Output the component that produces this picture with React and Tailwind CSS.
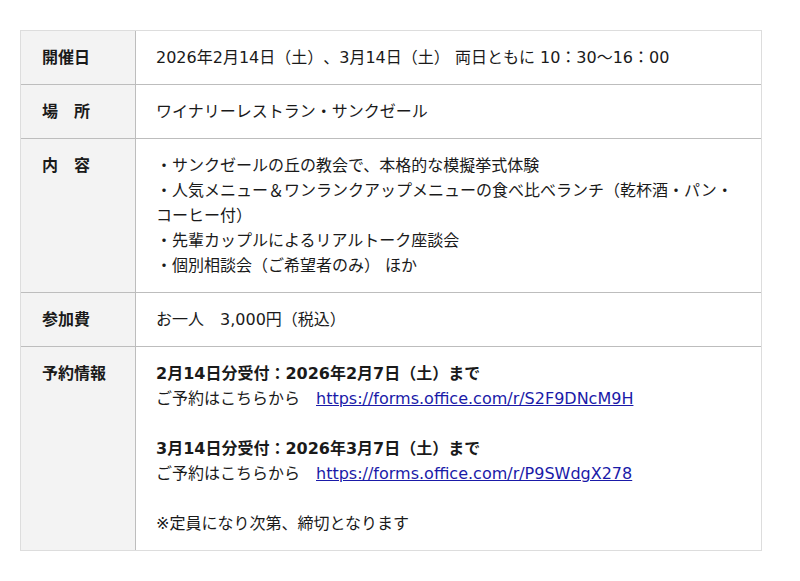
import React from 'react';

const rows = [
  {
    label: '開催日',
    content: <p>2026年2月14日（土）、3月14日（土） 両日ともに 10：30〜16：00</p>
  },
  {
    label: '場　所',
    content: <p>ワイナリーレストラン・サンクゼール</p>
  },
  {
    label: '内　容',
    content: (
      <div>
        <p>・サンクゼールの丘の教会で、本格的な模擬挙式体験</p>
        <p>・人気メニュー＆ワンランクアップメニューの食べ比べランチ（乾杯酒・パン・コーヒー付）</p>
        <p>・先輩カップルによるリアルトーク座談会</p>
        <p>・個別相談会（ご希望者のみ） ほか</p>
      </div>
    )
  },
  {
    label: '参加費',
    content: <p>お一人　3,000円（税込）</p>
  },
  {
    label: '予約情報',
    content: (
      <div>
        <p className="font-bold">2月14日分受付：2026年2月7日（土）まで</p>
        <p>
          {'ご予約はこちらから　'}
          <a href="#" className="text-[#1a1aa8] underline">https://forms.office.com/r/S2F9DNcM9H</a>
        </p>
        <p>&nbsp;</p>
        <p className="font-bold">3月14日分受付：2026年3月7日（土）まで</p>
        <p>
          {'ご予約はこちらから　'}
          <a href="#" className="text-[#1a1aa8] underline">https://forms.office.com/r/P9SWdgX278</a>
        </p>
        <p>&nbsp;</p>
        <p>※定員になり次第、締切となります</p>
      </div>
    )
  }
];

export default function App() {
  return (
    <div
      className="min-h-[581px] bg-white pl-[20px] pt-[30px] text-[16px] leading-[25px] text-[#1a1a1a] [text-spacing-trim:space-all]"
      style={{ fontFamily: '"DejaVu Sans", "Noto Sans CJK JP", sans-serif' }}
    >
      <div className="w-[742px] border border-[#dddddd]">
        {rows.map((row, i) => (
          <div
            key={row.label}
            className={`flex ${i < rows.length - 1 ? 'border-b border-[#bdbdbd]' : ''}`}
          >
            <div className="w-[115px] shrink-0 border-r border-[#bdbdbd] bg-[#f3f3f3] py-[14px] pl-[21px] font-bold">
              {row.label}
            </div>
            <div className="flex-1 py-[14px] px-[20px]">{row.content}</div>
          </div>
        ))}
      </div>
    </div>
  );
}
